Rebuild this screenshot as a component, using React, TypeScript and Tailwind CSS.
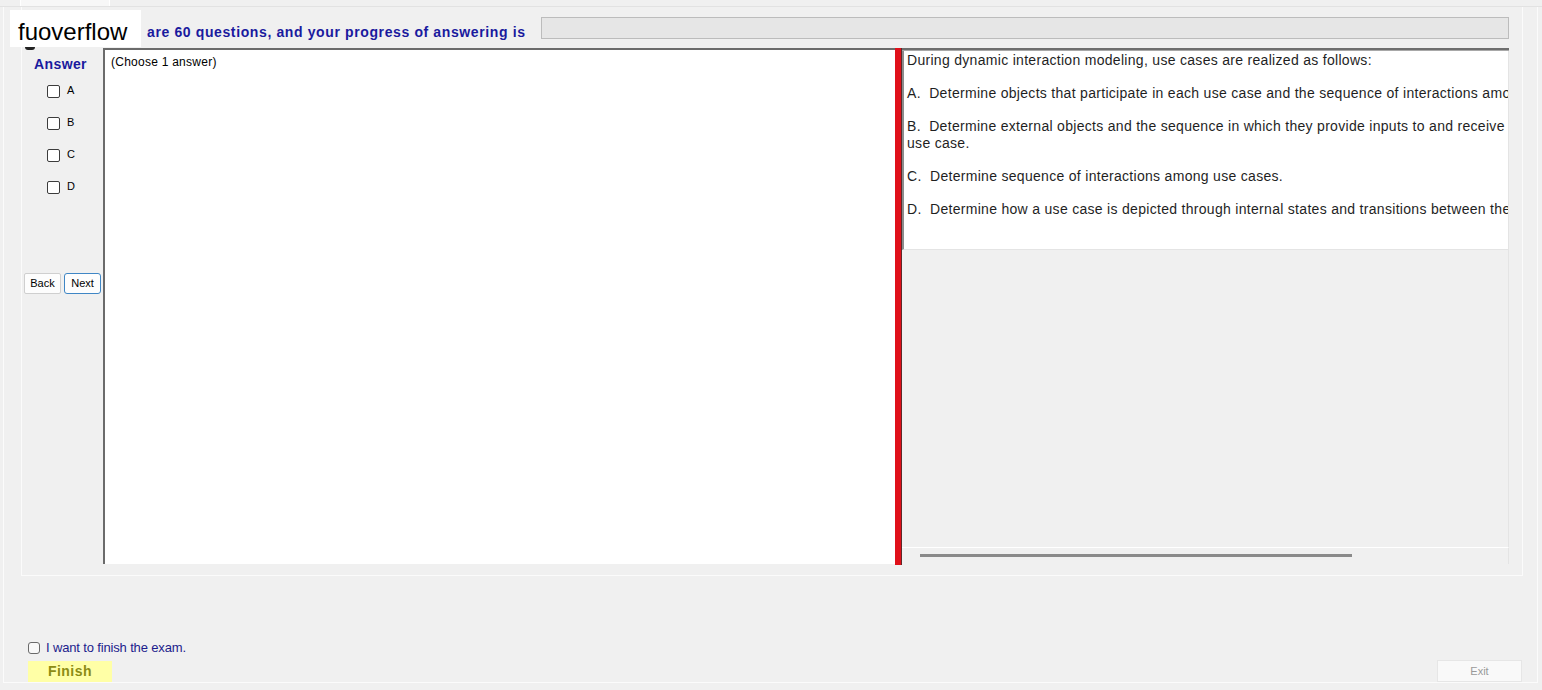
import React from 'react';

const OPTIONS = ['A', 'B', 'C', 'D'];

function Box({ className = '' }: { className?: string }) {
  return <span className={`block bg-white border border-[#3c3c3c] rounded-[2px] ${className}`} />;
}

function AnswerColumn() {
  return (
    <div className="w-[81px] h-full flex flex-col bg-[#f0f0f0]">
      <div className="pt-[9px] pl-[12px] text-[14px] leading-[15px] font-bold tracking-[0.4px] text-[#1a1a9e]">Answer</div>
      <div className="mt-[3px] flex flex-col">
        {OPTIONS.map((o) => (
          <label key={o} className="h-[32px] flex items-center gap-[7px] pl-[25px]">
            <Box className="w-[13px] h-[13px]" />
            <span className="text-[11px] leading-[13px] text-black -mt-[1px]">{o}</span>
          </label>
        ))}
      </div>
      <div className="mt-[70px] flex gap-[3px] pl-[2px]">
        <button className="w-[37px] h-[21px] bg-[#fdfdfd] border border-[#cfcfcf] rounded-[2px] text-[11px] leading-[13px] text-black">
          Back
        </button>
        <button className="w-[37px] h-[21px] bg-[#fdfdfd] border border-[#3f86c5] rounded-[3px] text-[11px] leading-[13px] text-black">
          Next
        </button>
      </div>
    </div>
  );
}

function QuestionText() {
  const para = 'whitespace-pre leading-[17px] mb-[16px]';
  return (
    <div className="pl-[3px] pt-[1px] text-[14px] tracking-[0.3px] text-[#1f1f1f]">
      <p className={para}>During dynamic interaction modeling, use cases are realized as follows:</p>
      <p className={para}>A.  Determine objects that participate in each use case and the sequence of interactions among them.</p>
      <p className={para}>
        B.  Determine external objects and the sequence in which they provide inputs to and receive outputs from each
        {'\n'}use case.
      </p>
      <p className={para}>C.  Determine sequence of interactions among use cases.</p>
      <p className={para}>D.  Determine how a use case is depicted through internal states and transitions between them.</p>
    </div>
  );
}

export default function App() {
  return (
    <div className="w-[1542px] h-[690px] bg-[#f0f0f0] relative overflow-hidden font-['Liberation_Sans',Arial,sans-serif]">
      {/* tab strip */}
      <div className="h-[7px] flex border-b border-[#e2e2e2]">
        <div className="ml-[20px] w-[90px] h-[6px] bg-[#f7f7f7] border-x border-white" />
      </div>

      <div className="ml-[3px] w-[1535px] h-[676px] border-x border-b border-[#fbfbfb] flex flex-col">
        {/* question group */}
        <div className="ml-[17px] w-[1502px] h-[569px] border-x border-b border-[#fbfbfb] flex flex-col">
          <div className="pt-[10px] flex items-start">
            <div className="ml-[125px] w-[394px] mt-[7px] text-[14px] leading-[16px] font-bold tracking-[0.62px] text-[#1a1a9e] whitespace-nowrap">
              are 60 questions, and your progress of answering is
            </div>
            <div className="w-[968px] h-[22px] bg-[#e6e6e6] border border-[#bcbcbc]" />
          </div>

          <div className="mt-[8px] h-[516px] flex">
            <AnswerColumn />

            <div className="w-[792px] h-full bg-white border-t-2 border-l-2 border-[#6b6b6b] pl-[6px] pt-[5px]">
              <div className="text-[12px] leading-[14px] tracking-[0.25px] text-black">(Choose 1 answer)</div>
            </div>

            <div className="w-[7px] h-[517px] bg-[#e0101a] border-r border-[#5c2a2a]" />

            <div className="w-[607px] h-full flex flex-col border-t-2 border-[#6e6e6e]">
              <div className="h-[1px] bg-[#a8a8a8]" />
              <div className="h-[199px] bg-white border-l-2 border-[#8c8c8c] border-r border-b border-r-[#e4e4e4] border-b-[#e4e4e4] overflow-hidden">
                <QuestionText />
              </div>
              <div className="flex-1 border-r border-[#e4e4e4]" />
              <div className="h-[17px] border-t border-white border-r border-r-[#e4e4e4] pt-[6px]">
                <div className="ml-[18px] w-[432px] h-[3px] bg-[#8a8a8a]" />
              </div>
            </div>
          </div>
        </div>

        {/* finish controls */}
        <div className="flex-1 flex items-end justify-between pl-[24px] pr-[15px]">
          <div className="flex flex-col">
            <label className="flex items-center gap-[6px] h-[14px]">
              <span className="block w-[12px] h-[12px] bg-[#f8f8f8] border border-[#6a6a6a] rounded-[3px]" />
              <span className="text-[13px] leading-[14px] tracking-[-0.15px] text-[#1c1c8c]">I want to finish the exam.</span>
            </label>
            <button className="mt-[6px] w-[84px] h-[21px] bg-[#ffffa6] text-[14px] leading-[15px] font-bold tracking-[0.5px] text-[#8c8c14]">
              Finish
            </button>
          </div>
          <button className="w-[85px] h-[22px] bg-[#f9f9f9] border border-[#e6e6e6] text-[11px] leading-[13px] text-[#9a9a9a]">
            Exit
          </button>
        </div>
      </div>

      {/* watermark */}
      <div className="absolute left-[10px] top-[10px] w-[131px] h-[37px] bg-white pl-[8px] pt-[9px]">
        <div className="text-[24px] leading-[26px] text-black">fuoverflow</div>
      </div>
      <div className="absolute left-[25px] top-[47px] w-[10px] h-[3px] bg-[#222] rounded-b-full" />
    </div>
  );
}
